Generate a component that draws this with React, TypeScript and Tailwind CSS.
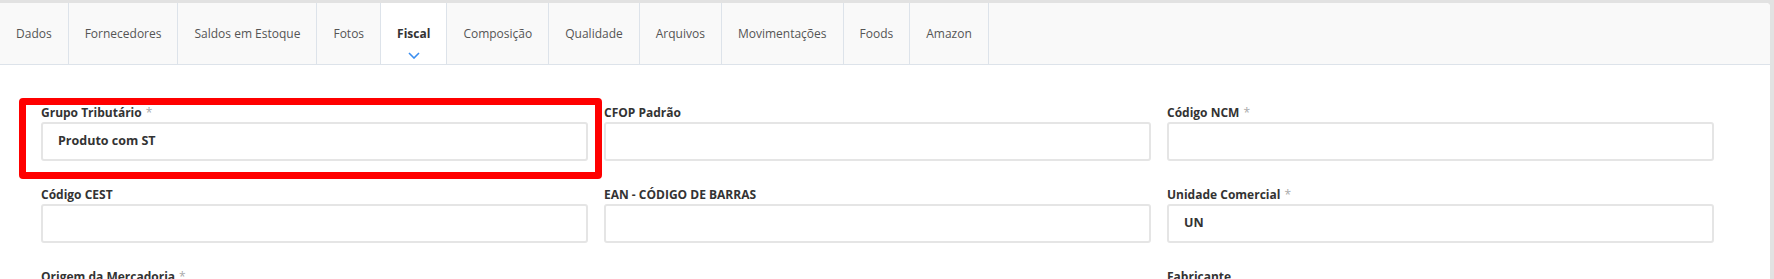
import React from 'react';

const tabs = [
    'Dados',
    'Fornecedores',
    'Saldos em Estoque',
    'Fotos',
    'Fiscal',
    'Composição',
    'Qualidade',
    'Arquivos',
    'Movimentações',
    'Foods',
    'Amazon',
];

type Field = {
    label: string;
    required?: boolean;
    value?: string;
    highlight?: boolean;
};

// Fiscal tab fields, row by row (null = empty cell)
const fields: (Field | null)[] = [
    { label: 'Grupo Tributário', required: true, value: 'Produto com ST', highlight: true },
    { label: 'CFOP Padrão' },
    { label: 'Código NCM', required: true },
    { label: 'Código CEST' },
    { label: 'EAN - CÓDIGO DE BARRAS' },
    { label: 'Unidade Comercial', required: true, value: 'UN' },
    { label: 'Origem da Mercadoria', required: true },
    null,
    { label: 'Fabricante' },
];

const FormField: React.FC<{ field: Field }> = ({ field }) => (
    <div className="relative">
        {field.highlight && (
            <div className="absolute -left-[22px] -top-[6px] w-[583px] h-[81px] border-[7px] border-[#ff0000] rounded-[4px] pointer-events-none" />
        )}
        <label className="block text-[12px] leading-[18px] font-bold text-[#333]">
            {field.label}
            {field.required && <span className="ml-[4px] font-normal text-[#aaa]">*</span>}
        </label>
        <div className="h-[39px] border-2 border-[#e5e5e5] rounded-[3px] px-[15px] flex items-center text-[12.5px] font-bold text-[#333]">
            {field.value}
        </div>
    </div>
);

const App: React.FC = () => {
    const active = 'Fiscal';

    return (
        <div className="min-h-screen bg-[#e2e2e2] pt-[3px] pr-[4px] font-['Open_Sans',sans-serif]">
            <div className="bg-white rounded-tr-[4px] min-h-[400px]">
                {/* Tabs */}
                <div className="flex h-[62px] bg-[#f9f9f9] border-b border-[#dde3ea] rounded-tr-[4px]">
                    {tabs.map(tab => {
                        const isActive = tab === active;
                        return (
                            <div
                                key={tab}
                                className={`relative flex items-center px-4 border-r border-[#dde3ea] text-[12px] ${
                                    isActive ? 'bg-white font-bold text-[#333]' : 'text-[#555]'
                                }`}
                            >
                                {tab}
                                {isActive && (
                                    <svg
                                        className="absolute left-1/2 -translate-x-1/2 bottom-[5px]"
                                        width="12"
                                        height="7"
                                        viewBox="0 0 12 7"
                                        fill="none"
                                    >
                                        <path d="M1 1l5 5 5-5" stroke="#3a8ef0" strokeWidth="1.6" />
                                    </svg>
                                )}
                            </div>
                        );
                    })}
                </div>

                {/* Form */}
                <div className="pt-[39px] pl-[41px]">
                    <div className="grid grid-cols-[547px_547px_547px] gap-x-[16px] gap-y-[25px]">
                        {fields.map((f, i) => (f ? <FormField key={i} field={f} /> : <div key={i} />))}
                    </div>
                </div>
            </div>
        </div>
    );
};

export default App;
